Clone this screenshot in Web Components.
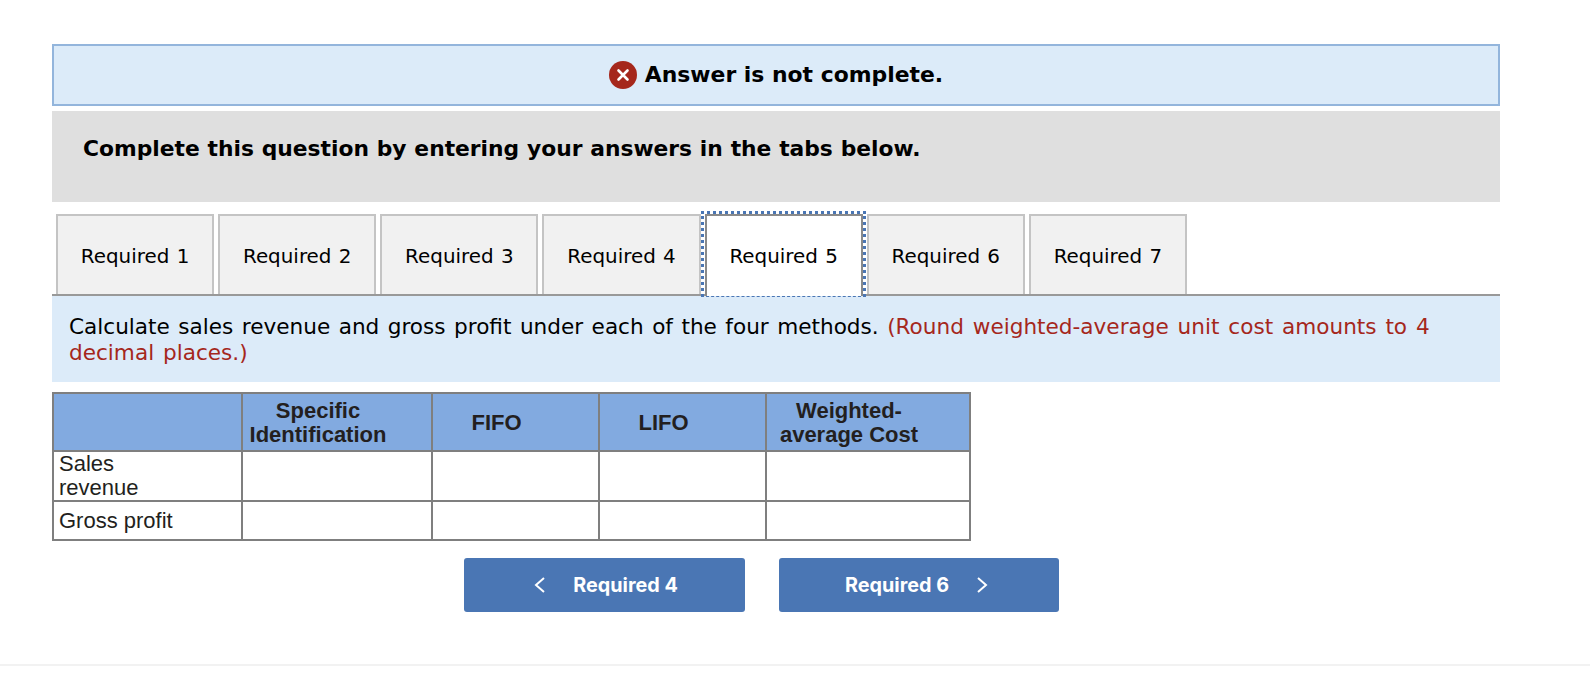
<!DOCTYPE html>
<html lang="en">
<head>
<meta charset="utf-8">
<title>Answer is not complete</title>
<style>
  html, body { margin: 0; padding: 0; background: #fff; }
</style>
</head>
<body>
<x-page>
  <x-alert>Answer is not complete.</x-alert>
  <x-instructions>Complete this question by entering your answers in the tabs below.</x-instructions>
  <x-tabs>
    <x-tab>Required 1</x-tab>
    <x-tab>Required 2</x-tab>
    <x-tab>Required 3</x-tab>
    <x-tab>Required 4</x-tab>
    <x-tab active>Required 5</x-tab>
    <x-tab>Required 6</x-tab>
    <x-tab>Required 7</x-tab>
  </x-tabs>
  <x-panel>Calculate sales revenue and gross profit under each of the four methods. <span>(Round weighted-average unit cost amounts to 4</span> <span>decimal places.)</span></x-panel>
  <x-grid></x-grid>
  <x-nav>
    <x-nav-button dir="prev">Required 4</x-nav-button>
    <x-nav-button dir="next">Required 6</x-nav-button>
  </x-nav>
  <x-rule></x-rule>
</x-page>
<script>
function def(name, html, init) {
  const t = document.createElement('template');
  t.innerHTML = html;
  customElements.define(name, class extends HTMLElement {
    constructor() {
      super();
      this.attachShadow({ mode: 'open' }).appendChild(t.content.cloneNode(true));
      if (init) init(this, this.shadowRoot);
    }
  });
}

def('x-page', `<style>
  :host { display: flex; flex-direction: column; width: 1590px; height: 676px; box-sizing: border-box;
    padding-top: 44px; overflow: hidden; font-family: "DejaVu Sans", Verdana, sans-serif; color: #000; }
</style><slot></slot>`);

def('x-alert', `<style>
  :host { display: flex; align-items: center; justify-content: center; gap: 8px; box-sizing: border-box;
    margin: 0 90px 5px 52px; height: 62px; background: #dcebf9; border: 2px solid #93b5dc;
    font-weight: 700; font-size: 21.9px; }
  svg { width: 28px; height: 28px; flex: none; }
  span { padding-bottom: 2px; }
</style>
<svg viewBox="0 0 28 28" aria-hidden="true"><circle cx="14" cy="14" r="14" fill="#a5271c"/><path d="M9.5 9.5l9 9M18.5 9.5l-9 9" stroke="#fff" stroke-width="2.6" stroke-linecap="round" fill="none"/></svg>
<span><slot></slot></span>`);

def('x-instructions', `<style>
  :host { display: block; box-sizing: border-box; margin: 0 90px 12px 52px; height: 91px;
    background: #dfdfdf; padding: 24px 0 0 31px; font-weight: 700; font-size: 21.8px; word-spacing: 0.2px; line-height: 28px; }
</style><slot></slot>`);

def('x-tabs', `<style>
  :host { display: flex; gap: 4px; box-sizing: border-box; margin: 0 90px 0 52px; padding-left: 4px;
    height: 82px; border-bottom: 2px solid #999; }
</style><slot></slot>`);

def('x-tab', `<style>
  :host { display: flex; align-items: center; justify-content: center; position: relative; box-sizing: border-box;
    width: 158.15px; height: 80px; background: #f1f1f1; border: 2px solid #c4c4c4; border-bottom: 0;
    font-size: 19.9px; word-spacing: 1px; padding-top: 3px; }
  :host([active]) { background: #fff; border-color: #8a8a8a; height: 82px; z-index: 1; padding-bottom: 2px; }
  .focus { display: none; position: absolute; left: -6px; right: -5px; top: -5px; bottom: -1px;
    border: 3px dotted #4a76b4; border-bottom: 1px dashed #4a76b4; pointer-events: none; }
  :host([active]) .focus { display: block; }
</style><slot></slot><span class="focus"></span>`);

def('x-panel', `<style>
  :host { display: block; box-sizing: border-box; margin: 0 90px 10px 52px; height: 86px; background: #dcebf9;
    padding: 18px 50px 0 17px; font-size: 21.6px; line-height: 26px; word-spacing: 1.6px; }
  ::slotted(span) { color: #a5271c; word-spacing: 2px; }
</style><slot></slot>`);

def('x-grid', `<style>
  :host { display: block; margin: 0 0 17px 52px; font-family: "Liberation Sans", Arial, sans-serif; font-size: 22px; line-height: 24px; color: #231f20; }
  table { border-collapse: collapse; table-layout: fixed; width: 917px; }
  th, td { border: 2px solid #7f7f7f; padding: 0; }
  th { background: #82aae0; font-weight: 700; text-align: center; height: 55px; padding: 1px 38px 0 0; }
  td.l { padding: 0 60px 0 5px; text-align: left; }
  tr.a td { height: 48px; }
  tr.b td { height: 37px; }
</style>
<table>
  <colgroup><col style="width:189px"><col style="width:190px"><col style="width:167px"><col style="width:167px"><col style="width:204px"></colgroup>
  <thead><tr><th></th><th>Specific Identification</th><th>FIFO</th><th>LIFO</th><th>Weighted-average Cost</th></tr></thead>
  <tbody>
    <tr class="a"><td class="l">Sales revenue</td><td></td><td></td><td></td><td></td></tr>
    <tr class="b"><td class="l">Gross profit</td><td></td><td></td><td></td><td></td></tr>
  </tbody>
</table>`);

def('x-nav', `<style>
  :host { display: flex; gap: 34px; margin-left: 464px; height: 54px; margin-bottom: 52px; }
</style><slot></slot>`);

def('x-rule', `<style>
  :host { display: block; height: 2px; background: #f2f2f2; }
</style>`);

def('x-nav-button', `<style>
  :host { display: flex; align-items: center; justify-content: center; gap: 27px; box-sizing: border-box;
    width: 280px; height: 54px; border-radius: 3px; background: #4a76b4; color: #fff;
    font-family: Inter, Roboto, sans-serif; font-weight: 700; font-size: 19.8px; }
  :host([dir="prev"]) { width: 281px; padding-left: 2px; }
  :host([dir="next"]) { padding-right: 4px; }
  svg { width: 13px; height: 18px; flex: none; }
</style>
<svg class="p" viewBox="0 0 13 18" aria-hidden="true"><path d="M11 2L3 9l8 7" stroke="#fff" stroke-width="2" fill="none"/></svg>
<slot></slot>
<svg class="n" viewBox="0 0 13 18" aria-hidden="true"><path d="M2 2l8 7-8 7" stroke="#fff" stroke-width="2" fill="none"/></svg>`,
(el, root) => {
  queueMicrotask(() => {
    root.querySelector(el.getAttribute('dir') === 'prev' ? '.n' : '.p').remove();
  });
});
</script>
</body>
</html>
